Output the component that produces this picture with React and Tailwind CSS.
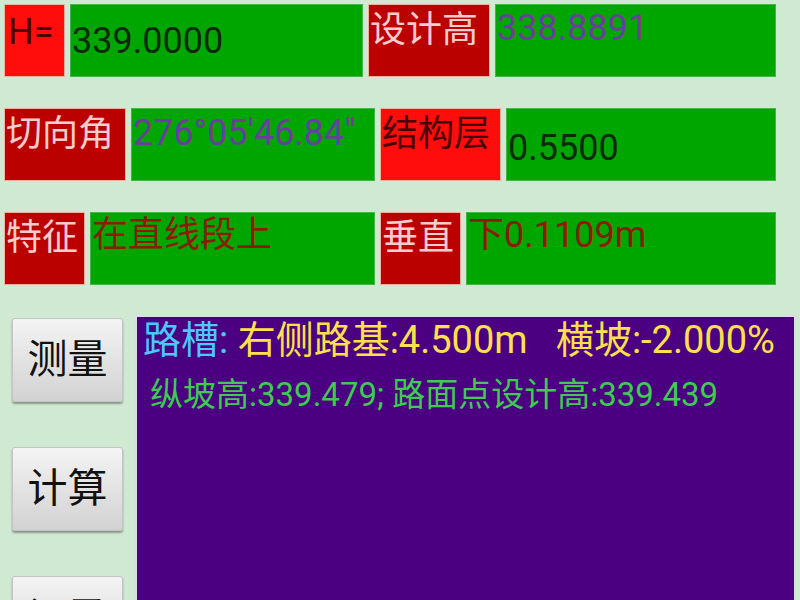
import React from 'react';

// ── Field rows ─────────────────────────────────────────────
const font = { fontFamily: 'Roboto, "Noto Sans CJK SC", sans-serif' };

const rows = [
  [
    { w: 'w-[61px]', kind: 'red', text: 'H=', pad: 'pt-[9px] pl-[3px]' },
    { w: 'w-[293px]', kind: 'val', text: '339.0000', color: 'text-[#0a2a0a]', pad: 'pt-[18px]' },
    { w: 'w-[122px]', kind: 'dark', text: '设计高' },
    { w: 'w-[281px]', kind: 'val', text: '338.8891', color: 'text-[#6a3f9c]', pad: 'pt-[5px]' },
  ],
  [
    { w: 'w-[122px]', kind: 'dark', text: '切向角' },
    { w: 'w-[244px]', kind: 'val', text: '276°05\'46.84"', color: 'text-[#6a3f9c]', pad: 'pt-[6px]' },
    { w: 'w-[121px]', kind: 'red', text: '结构层' },
    { w: 'w-[270px]', kind: 'val', text: '0.5500', color: 'text-[#0a2a0a]', pad: 'pt-[21px]' },
  ],
  [
    { w: 'w-[81px]', kind: 'dark', text: '特征' },
    { w: 'w-[285px]', kind: 'val', text: '在直线段上', color: 'text-[#8a1c00]', pad: 'pt-[4px]' },
    { w: 'w-[81px]', kind: 'dark', text: '垂直' },
    { w: 'w-[310px]', kind: 'val', text: '下0.1109m', color: 'text-[#8a1c00]', pad: 'pt-[4px]' },
  ],
];

const Cell = ({ c }) => {
  if (c.kind === 'val') {
    return (
      <div className={`${c.w} h-full bg-[#00a600] border border-[#3fb83f] ${c.pad} pl-[1px] text-[36px] leading-[36px] whitespace-nowrap overflow-hidden ${c.color}`}>
        {c.text}
      </div>
    );
  }
  const bg = c.kind === 'red' ? 'bg-[#ff0c0c] text-[#4a0000]' : 'bg-[#bb0000] text-[#f6cccc]';
  return (
    <div className={`${c.w} h-full ${bg} border border-[#f0b0a0] ${c.pad || 'pt-[7px] pl-[1px]'} text-[36px] leading-[36px] whitespace-nowrap overflow-hidden`}>
      {c.text}
    </div>
  );
};

const Btn = ({ label }) => (
  <div className="w-[111px] h-[84px] shrink-0 flex items-center justify-center bg-gradient-to-b from-[#f4f4f4] to-[#d2d2d2] border border-[#c4c4c4] rounded-[3px] shadow-[0_2px_2px_rgba(0,0,0,0.35)] text-[40px] text-[#111]">
    {label}
  </div>
);

export default function App() {
  return (
    <div className="w-[800px] h-[600px] overflow-hidden bg-[#d0e9d3]" style={font}>
      <div className="flex flex-col gap-[31px] pt-[4px] pl-[4px]">
        {rows.map((r, i) => (
          <div key={i} className="flex gap-[5px] h-[73px]">
            {r.map((c, j) => <Cell key={j} c={c} />)}
          </div>
        ))}
      </div>

      {/* ── Buttons + result panel ─────────────────────────── */}
      <div className="flex mt-[30px]">
        <div className="flex flex-col gap-[45px] pl-[12px] pt-[3px] w-[135px] h-[300px]">
          <Btn label="测量" />
          <Btn label="计算" />
          <Btn label="记录" />
        </div>
        <div className="w-[661px] h-[300px] bg-[#4a0080] border-t-2 border-l-2 border-r-2 border-[#dcdce4] pl-[6px] pt-[1px]">
          <div className="text-[38px] leading-[44px] whitespace-nowrap">
            <span className="text-[#4cc8ff]">路槽: </span>
            <span className="text-[#ffe04c]">右侧路基:4.500m&nbsp;&nbsp;&nbsp;横坡:-2.000%</span>
          </div>
          <div className="mt-[15px] text-[#3ccc50] text-[33px] leading-[36px] pl-[7px] whitespace-nowrap">
            纵坡高:339.479; 路面点设计高:339.439
          </div>
        </div>
      </div>
    </div>
  );
}
